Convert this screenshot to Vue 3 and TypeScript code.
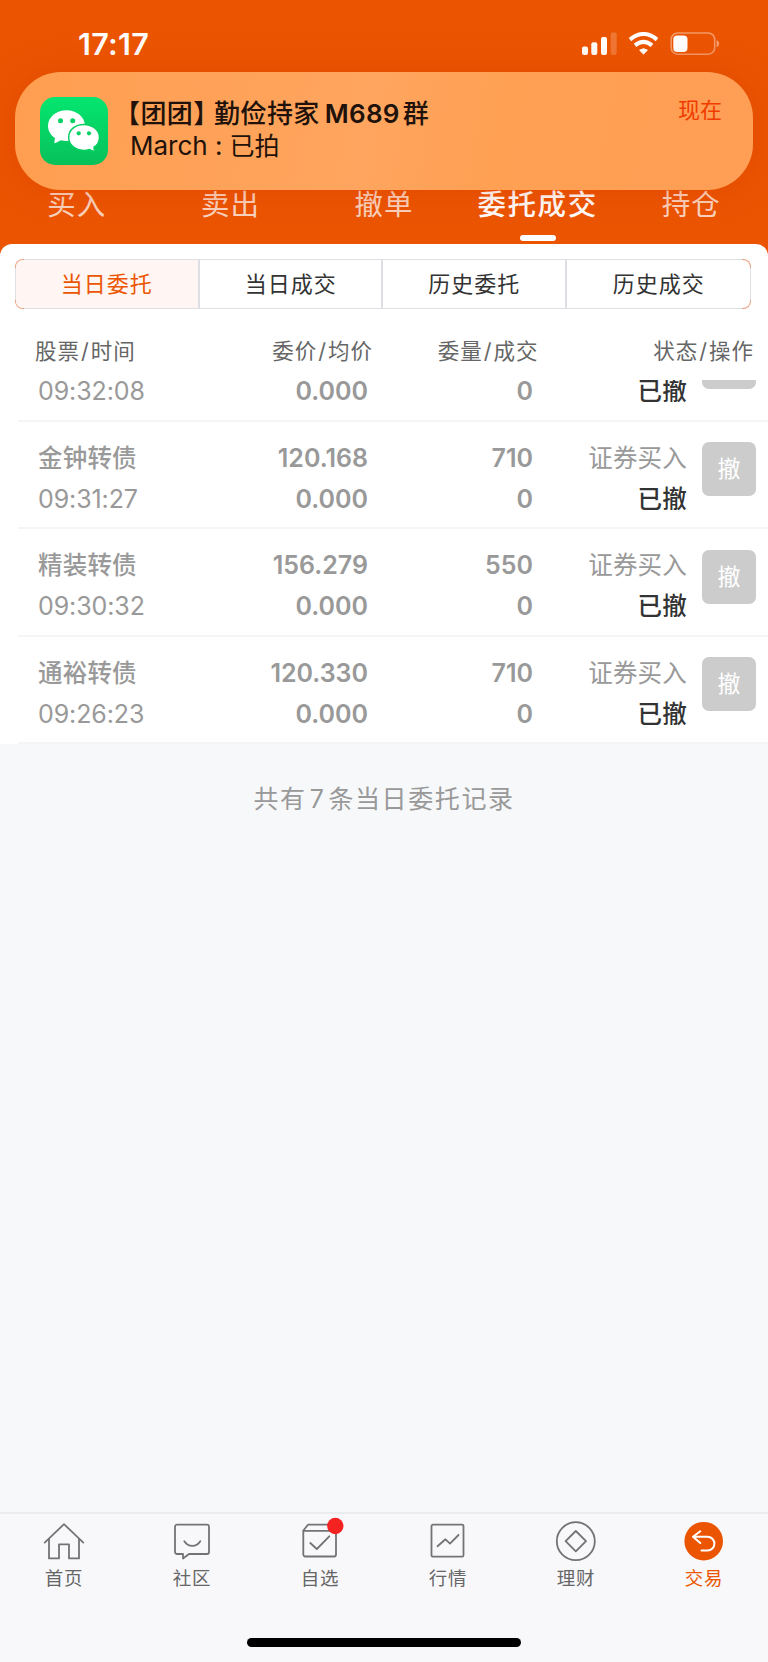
<script setup lang="ts">
interface Order {
  name: string
  time: string
  price: string
  average: string
  quantity: string
  filled: string
  side: string
  status: string
  action: string
}

const tabs: string[] = ['买入', '卖出', '撤单', '委托成交', '持仓']
const activeTab = '委托成交'
const segments: string[] = ['当日委托', '当日成交', '历史委托', '历史成交']
const activeSegment = '当日委托'
const columns: [string, string][] = [['股票', '时间'], ['委价', '均价'], ['委量', '成交'], ['状态', '操作']]

const orders: Order[] = [
  { name: '', time: '09:32:08', price: '', average: '0.000', quantity: '', filled: '0', side: '', status: '已撤', action: '' },
  { name: '金钟转债', time: '09:31:27', price: '120.168', average: '0.000', quantity: '710', filled: '0', side: '证券买入', status: '已撤', action: '撤' },
  { name: '精装转债', time: '09:30:32', price: '156.279', average: '0.000', quantity: '550', filled: '0', side: '证券买入', status: '已撤', action: '撤' },
  { name: '通裕转债', time: '09:26:23', price: '120.330', average: '0.000', quantity: '710', filled: '0', side: '证券买入', status: '已撤', action: '撤' },
]
</script>

<template>
  <div class="screen">
    <header class="top">
      <div class="status-bar">
        <span class="clock">17:17</span>
        <svg class="indicators" width="140" height="26" viewBox="0 0 140 26">
          <g fill="#fff">
            <rect x="0" y="14.5" width="6" height="8.5" rx="2" />
            <rect x="9.3" y="10.3" width="6" height="12.7" rx="2" />
            <rect x="19" y="5" width="6" height="18" rx="2" />
            <rect x="28.7" y="0.5" width="6" height="22.5" rx="2" opacity=".2" />
            <path d="M61.5 22 57.6 18.2Q61.5 15.2 65.4 18.2Z" stroke="#fff" stroke-width="1" stroke-linejoin="round" />
          </g>
          <g fill="none" stroke="#fff" stroke-width="4">
            <path d="M48 7.6Q61.5 -3.6 75 7.6" />
            <path d="M53 13.4Q61.5 6.4 70 13.4" />
          </g>
          <rect x="89.2" y="1" width="43.5" height="21.2" rx="6.5" fill="none" stroke="#fff" stroke-opacity=".4" stroke-width="1.6" />
          <rect x="91.3" y="3.4" width="14.2" height="16.6" rx="4" fill="#fff" />
          <path d="M134.6 8Q137.2 9 137.2 11.6T134.6 15.2Z" fill="#fff" opacity=".45" />
        </svg>
      </div>
      <nav class="tabs">
        <span v-for="tab in tabs" :key="tab" class="tab" :class="{ active: tab === activeTab }">{{ tab }}</span>
      </nav>
    </header>

    <main class="panel">
      <div class="segments">
        <span v-for="item in segments" :key="item" class="segment" :class="{ active: item === activeSegment }">{{ item }}</span>
      </div>
      <div class="columns">
        <span v-for="[first, second] in columns" :key="first">{{ first }}<i class="slash">/</i>{{ second }}</span>
      </div>
      <div class="list">
        <div class="rows">
          <article v-for="order in orders" :key="order.time" class="row">
            <div class="cell name"><span>{{ order.name }}</span><span class="time">{{ order.time }}</span></div>
            <div class="cell number"><span>{{ order.price }}</span><span>{{ order.average }}</span></div>
            <div class="cell number"><span>{{ order.quantity }}</span><span>{{ order.filled }}</span></div>
            <div class="cell state"><span>{{ order.side }}</span><span class="done">{{ order.status }}</span></div>
            <button class="cancel">{{ order.action }}</button>
          </article>
        </div>
      </div>
    </main>
    <p class="summary">共有<span class="count">7</span>条当日委托记录</p>

    <footer class="bottom">
      <nav class="dock">
        <div class="item">
          <svg width="46" height="46" viewBox="0 0 46 46">
            <path d="M3.7 23.6 23 5.2 42.3 23.6M8 20V39.4H18V25.3H28V39.4H38V20" />
          </svg>
          <span>首页</span>
        </div>
        <div class="item">
          <svg width="46" height="46" viewBox="0 0 46 46">
            <path d="M8 5.7H38a2 2 0 0 1 2 2V33a2 2 0 0 1-2 2H20L14 39.5V35H8a2 2 0 0 1-2-2V7.7a2 2 0 0 1 2-2Z" />
            <path d="M15.3 22.3c4 6.1 12 6.1 16 0" />
          </svg>
          <span>社区</span>
        </div>
        <div class="item">
          <svg width="46" height="46" viewBox="0 0 46 46">
            <path d="M6.3 11.8H39V35.5a2 2 0 0 1-2 2H8.3a2 2 0 0 1-2-2ZM6.3 11.5 11 5.7H34.5L39 11.5" />
            <path d="m13.3 24 6.5 6L32.3 17.3" />
            <circle class="dot" cx="38.3" cy="7" r="8.2" />
          </svg>
          <span>自选</span>
        </div>
        <div class="item">
          <svg width="46" height="46" viewBox="0 0 46 46">
            <rect x="6.5" y="5.7" width="32" height="32" rx="1.5" />
            <path d="m12.5 27.2 8-6.9 4.5 4.3 8.5-8.6" />
          </svg>
          <span>行情</span>
        </div>
        <div class="item">
          <svg width="46" height="46" viewBox="0 0 46 46">
            <circle cx="22.8" cy="22.2" r="19" />
            <path d="M22.8 12 33 22.2 22.8 32.4 12.6 22.2Z" />
          </svg>
          <span>理财</span>
        </div>
        <div class="item current">
          <svg width="46" height="46" viewBox="0 0 46 46">
            <circle class="disc" cx="22.7" cy="22.2" r="19.3" />
            <path d="M19.3 12.3 12 17.8 19.3 24M12 17.8H26.5a6.9 6.9 0 0 1 0 13.8H20.5" />
          </svg>
          <span>交易</span>
        </div>
      </nav>
      <div class="home-bar"></div>
    </footer>

    <aside class="banner">
      <svg class="wechat" width="68" height="68" viewBox="0 0 68 68">
        <defs>
          <linearGradient id="green" x1="0" y1="0" x2="0" y2="1">
            <stop offset="0" stop-color="#04e66f" />
            <stop offset="1" stop-color="#07c05a" />
          </linearGradient>
        </defs>
        <rect width="68" height="68" rx="15" fill="url(#green)" />
        <path d="M26.5 13.3C16 13.3 8 20.3 8 29c0 5 2.8 9.2 7 12L14.3 45.5c0 .7.5.9 1.1.6L21 43.3c8 2.2 24-.5 24-14.3C45 20.3 37 13.3 26.5 13.3Z" fill="#fff" />
        <path d="M43.8 27.5C35.2 27.5 28.7 33 28.7 40.4S35.2 53.4 43.8 53.4C46 53.4 48 53 49.5 52.5L53.5 54.5C54.2 54.8 54.6 54.4 54.5 53.8L54 50.2C57.5 48 59.5 44.5 59.5 40.4 59.5 33 52.4 27.5 43.8 27.5Z" fill="#fff" stroke="#06cf62" stroke-width="1.5" />
        <g fill="#07d064">
          <circle cx="20.5" cy="23.8" r="2.5" />
          <circle cx="32.7" cy="23.8" r="2.5" />
          <circle cx="38.7" cy="36.3" r="2.1" />
          <circle cx="49" cy="36.3" r="2.1" />
        </g>
      </svg>
      <div class="message">
        <strong class="title"><span class="group">【团团】</span><span>勤俭持家</span><span class="code">M689</span><span>群</span></strong>
        <span class="body"><span class="sender">March :</span><span class="text">已拍</span></span>
      </div>
      <time class="when">现在</time>
    </aside>
  </div>
</template>

<style>
html,
body {
  margin: 0;
  background: #f7f8fa;
}
</style>

<style scoped>
.screen {
  position: relative;
  display: flex;
  flex-direction: column;
  width: 768px;
  height: 1662px;
  overflow: hidden;
  background: linear-gradient(#eb5502 280px, #f7f8fa 280px);
  font-family: Inter, "Noto Sans CJK SC", sans-serif;
}

.top {
  height: 244px;
}

.status-bar {
  display: flex;
  justify-content: space-between;
  height: 72px;
  padding: 0 46px 0 78px;
  color: #fff;
}

.clock {
  margin-top: 26px;
  font-size: 30.5px;
  font-weight: 600;
  line-height: 36px;
  letter-spacing: 0.3px;
}

.indicators {
  margin: 32px 0.5px 0 0;
}

.tabs {
  display: grid;
  grid-template-columns: repeat(5, 1fr);
  margin-top: 112px;
  color: rgba(255, 255, 255, 0.76);
  font-size: 28.5px;
  line-height: 42px;
  letter-spacing: 1px;
}

.tab {
  display: flex;
  flex-direction: column;
  align-items: center;
}

.tab.active {
  color: #fff;
  font-weight: 500;
  letter-spacing: 1.6px;
}

.tab.active::after {
  width: 36px;
  height: 6px;
  margin-top: 9px;
  border-radius: 3px;
  background: #fff;
  content: "";
}

.panel {
  height: 500px;
  border-radius: 12px 12px 0 0;
  background: #fff;
}

.panel::before {
  display: table;
  content: "";
}

.segments {
  display: grid;
  grid-template-columns: repeat(4, 1fr);
  box-sizing: border-box;
  width: 736px;
  height: 50px;
  margin: 15px 0 0 15px;
  overflow: hidden;
  border: 1.5px solid transparent;
  border-radius: 8px;
  background:
    linear-gradient(#fff, #fff) padding-box,
    linear-gradient(#dddfe5, #dddfe5) left center / 3px calc(100% - 18px) no-repeat border-box,
    linear-gradient(#dddfe5, #dddfe5) right center / 3px calc(100% - 18px) no-repeat border-box,
    linear-gradient(90deg, #eb9d78 9px, #dddfe5 9px calc(100% - 9px), #eb9d78 calc(100% - 9px)) border-box;
}

.segment {
  color: #333;
  font-size: 22px;
  line-height: 49px;
  letter-spacing: 1px;
  text-align: center;
}

.segment:not(:last-child) {
  border-right: 2px solid #dddfe5;
}

.segment:not(:first-child) {
  padding-left: 1px;
}

.segment.active {
  background: #fff5f2;
  color: #eb5502;
}

.columns {
  display: grid;
  grid-template-columns: 135px 203px 165.5px 1fr;
  height: 71px;
  padding: 0 14px 0 35px;
  color: #666;
  font-size: 21.5px;
  line-height: 84px;
  letter-spacing: 1px;
  text-align: right;
}

.columns span:first-child {
  text-align: left;
}

.slash {
  margin: 0 1px;
  font-style: normal;
}

.list {
  height: 364.5px;
  overflow: hidden;
}

.rows {
  margin-top: -66.1px;
}

.row {
  display: grid;
  grid-template-columns: 130px 200px 165px 154px 54px;
  box-sizing: border-box;
  height: 107.6px;
  margin-left: 18px;
  padding: 15px 0 0 20px;
  border-bottom: 2px solid #f5f5f6;
  color: #999;
  font-size: 24.5px;
}

.cell {
  display: flex;
  flex-direction: column;
  gap: 17px;
  padding-top: 9.1px;
  letter-spacing: 0.2px;
  text-align: right;
  white-space: nowrap;
}

.cell span {
  height: 24px;
  line-height: 24px;
}

.name {
  font-weight: 500;
  text-align: left;
}

.name .time {
  font-size: 25px;
  font-weight: 400;
  letter-spacing: -0.1px;
}

.number {
  font-size: 25px;
  font-weight: 560;
  letter-spacing: 0;
}

.done {
  color: #333;
  font-weight: 500;
}

.cancel {
  width: 54px;
  height: 54px;
  margin: 5.7px 0 0 15px;
  padding: 0;
  border: 0;
  border-radius: 7px;
  background: #ccc;
  color: #fff;
  font: 23px/54px Inter, "Noto Sans CJK SC", sans-serif;
}

.summary {
  margin: 35px 0 0;
  color: #999;
  font-size: 25px;
  line-height: 40px;
  letter-spacing: 1.6px;
  text-align: center;
}

.count {
  margin: 0 3px;
}

.bottom {
  box-sizing: border-box;
  height: 150px;
  margin-top: auto;
  border-top: 2px solid #ebecee;
  background: #f8f8fb;
}

.dock {
  display: grid;
  grid-template-columns: repeat(6, 1fr);
}

.item {
  display: flex;
  flex-direction: column;
  align-items: center;
  padding-top: 5px;
  color: #666;
  font-size: 18.5px;
  line-height: 27px;
  letter-spacing: 0.8px;
}

.item svg {
  overflow: visible;
  fill: none;
  stroke: #737375;
  stroke-linecap: round;
  stroke-linejoin: round;
  stroke-width: 1.8;
}

.item .dot {
  fill: #f52222;
  stroke: none;
}

.item.current {
  color: #eb5502;
}

.item.current svg {
  stroke: #fff;
  stroke-width: 2;
}

.item .disc {
  fill: #eb5502;
  stroke: none;
}

.home-bar {
  width: 274px;
  height: 9px;
  margin: 46px auto 0;
  border-radius: 5px;
  background: #000;
}

.banner {
  position: absolute;
  top: 72px;
  left: 15px;
  display: flex;
  box-sizing: border-box;
  width: 738px;
  height: 118px;
  padding: 25px 31px 0 25px;
  border-radius: 46px;
  background: linear-gradient(100deg, #ff9e50, #ffa55f 48%, #ffa053 65%, #ff9e55);
  box-shadow: 0 0 36px rgba(205, 45, 0, 0.3);
  color: #20120a;
  font-size: 26px;
}

.message {
  display: flex;
  flex: 1;
  flex-direction: column;
  margin: 1px 0 0 22px;
}

.title,
.body {
  display: flex;
  height: 32px;
  line-height: 32px;
  white-space: nowrap;
}

.title {
  font-weight: 500;
  letter-spacing: 0.4px;
}

.group {
  margin: 0 -5.5px 0 -16px;
}

.code {
  margin: 0 3px 0 5px;
  font-weight: 600;
  letter-spacing: 0.3px;
}

.sender {
  margin-right: 7px;
}

.text {
  font-size: 25px;
}

.when {
  color: #f03c00;
  font-size: 22px;
  line-height: 26px;
}
</style>
